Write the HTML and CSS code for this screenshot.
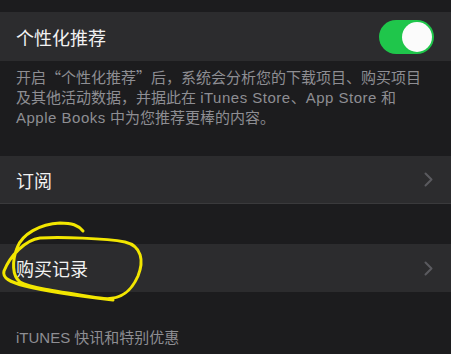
FILE: index.html
```html
<!DOCTYPE html>
<html lang="zh-CN">
<head>
<meta charset="utf-8">
<link rel="stylesheet" href="styles.css">
</head>
<body>
<div class="page">
  <div class="cell cell-first">
    <span class="label">个性化推荐</span>
    <span class="toggle"><span class="knob"></span></span>
  </div>
  <p class="note">开启<span class="q">“</span>个性化推荐<span class="q">”</span>后，系统会分析您的下载项目、购买项目及其他活动数据，并据此在 <span class="en">iTunes Store</span>、<span class="en">App Store</span> 和 <span class="en">Apple Books</span> 中为您推荐更棒的内容。</p>
  <div class="cell cell-sub">
    <span class="label">订阅</span>
    <svg class="chev" width="9" height="15" viewBox="0 0 9 15"><path d="M1.5 1.5 L7.5 7.5 L1.5 13.5" fill="none" stroke="#5a5a5f" stroke-width="2" stroke-linecap="round" stroke-linejoin="round"/></svg>
  </div>
  <div class="cell cell-buy">
    <span class="label">购买记录</span>
    <svg class="chev" width="9" height="15" viewBox="0 0 9 15"><path d="M1.5 1.5 L7.5 7.5 L1.5 13.5" fill="none" stroke="#5a5a5f" stroke-width="2" stroke-linecap="round" stroke-linejoin="round"/></svg>
    <svg class="scribble" width="150" height="90" viewBox="0 0 150 90"><path d="M83 15 C78 9, 72 7, 60 7 C40 8, 22 18, 17 32 C12 45, 12 60, 20 66 C30 72, 60 76, 100 82 C118 85, 130 78, 138 60 C144 45, 142 30, 125 26 C105 22, 60 21, 40 22 C25 24, 10 40, 4 55 C2 62, 10 66, 25 70 C50 76, 80 80, 113 84" fill="none" stroke="#f2e600" stroke-width="3" stroke-linecap="round" stroke-linejoin="round"/></svg>
  </div>
  <div class="header">iTUNES 快讯和特别优惠</div>
</div>
</body>
</html>
```
FILE: styles.css
```css
html, body {
  margin: 0;
  padding: 0;
  background: #1c1c1e;
}
.page {
  width: 451px;
  height: 354px;
  overflow: hidden;
  padding-top: 12px;
  box-sizing: border-box;
  font-family: "Liberation Sans", "Noto Sans CJK SC", sans-serif;
  position: relative;
}
.cell {
  height: 49px;
  background: #2c2c2e;
  display: flex;
  align-items: center;
  justify-content: space-between;
  padding: 0 18px 0 16px;
  box-sizing: border-box;
  position: relative;
}
.label {
  color: #f2f2f2;
  font-size: 18px;
  line-height: 24px;
  font-family: "Noto Sans CJK SC", sans-serif;
}
.toggle {
  width: 55px;
  height: 34px;
  border-radius: 17px;
  background: #1fc64b;
  display: flex;
  align-items: center;
  justify-content: flex-end;
  padding: 2px;
  box-sizing: border-box;
  margin-right: -1px;
}
.knob {
  width: 30px;
  height: 30px;
  border-radius: 50%;
  background: #fbfbfb;
}
.note {
  margin: 0;
  padding: 6px 20px 28px 16px;
  color: #8e8e93;
  font-size: 15px;
  line-height: 20px;
}
.q {
  font-family: "Noto Sans CJK SC", sans-serif;
}
.en {
  letter-spacing: 0.5px;
}
.cell-sub {
  height: 48px;
  border-bottom: 1px solid #3a3a3c;
}
.cell-buy {
  height: 48px;
  margin-top: 40px;
}
.scribble {
  position: absolute;
  left: 0;
  top: -28px;
}
.header {
  padding: 36px 16px 0;
  color: #8e8e93;
  font-size: 15px;
  line-height: 20px;
}
```
